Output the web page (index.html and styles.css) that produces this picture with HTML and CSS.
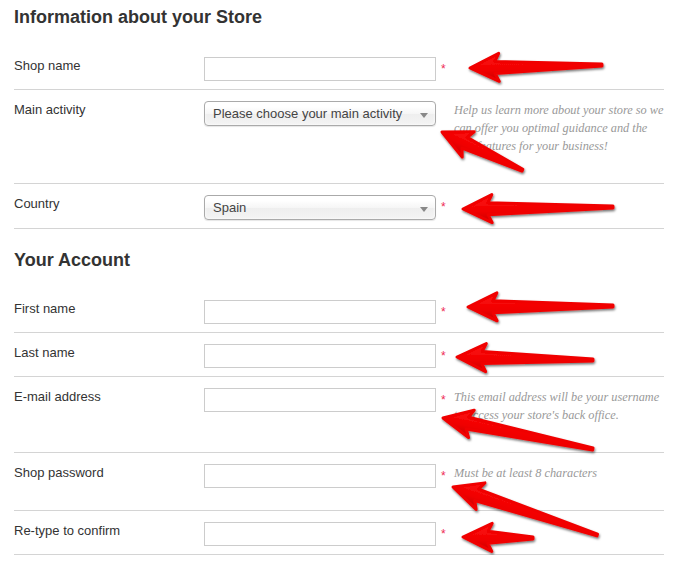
FILE: index.html
```html
<!DOCTYPE html>
<html lang="en">
<head>
<meta charset="utf-8">
<title>Store setup</title>
<link rel="stylesheet" href="styles.css">
</head>
<body>
<div class="page">
  <h2 class="section-title section-title--first">Information about your Store</h2>

  <div class="row">
    <label class="row-label">Shop name</label>
    <input class="text-input" type="text">
    <span class="required">*</span>
  </div>

  <div class="row">
    <label class="row-label">Main activity</label>
    <div class="select-box"><span class="select-text">Please choose your main activity</span><span class="select-caret"></span></div>
    <span class="required"></span>
    <p class="help">Help us learn more about your store so we can offer you optimal guidance and the best features for your business!</p>
  </div>

  <div class="row">
    <label class="row-label">Country</label>
    <div class="select-box"><span class="select-text">Spain</span><span class="select-caret"></span></div>
    <span class="required">*</span>
  </div>

  <h2 class="section-title">Your Account</h2>

  <div class="row">
    <label class="row-label">First name</label>
    <input class="text-input" type="text">
    <span class="required">*</span>
  </div>

  <div class="row">
    <label class="row-label">Last name</label>
    <input class="text-input" type="text">
    <span class="required">*</span>
  </div>

  <div class="row">
    <label class="row-label">E-mail address</label>
    <input class="text-input" type="text">
    <span class="required">*</span>
    <p class="help">This email address will be your username to access your store's back office.</p>
  </div>

  <div class="row">
    <label class="row-label">Shop password</label>
    <input class="text-input" type="password">
    <span class="required">*</span>
    <p class="help">Must be at least 8 characters</p>
  </div>

  <div class="row">
    <label class="row-label">Re-type to confirm</label>
    <input class="text-input" type="password">
    <span class="required">*</span>
  </div>
</div>

<svg class="annotations" width="690" height="562" viewBox="0 0 690 562" aria-hidden="true">
  <defs>
    <linearGradient id="redfill" x1="0" y1="0" x2="0" y2="1">
      <stop offset="0" stop-color="#ff1414"/>
      <stop offset="0.6" stop-color="#f00000"/>
      <stop offset="1" stop-color="#c80000"/>
    </linearGradient>
    <filter id="shadow" x="-20%" y="-50%" width="140%" height="200%">
      <feDropShadow dx="0.8" dy="1.6" stdDeviation="0.9" flood-color="#000" flood-opacity="0.55"/>
    </filter>
  </defs>
  <g class="arrow" fill="url(#redfill)" stroke="#f00000" stroke-width="3" stroke-linejoin="round" filter="url(#shadow)">
    <path transform="translate(470 68) rotate(-1.3)" d="M0,0 L29,-14 L25,-6 L132,-1 L132,1 L25,6 L29,14 Z"/>
    <path transform="translate(442 132) rotate(25.4)" d="M0,0 L29,-14 L25,-6 L89,-1 L89,1 L25,6 L29,14 Z"/>
    <path transform="translate(463 209) rotate(-0.8)" d="M0,0 L29,-14 L25,-6 L150,-1 L150,1 L25,6 L29,14 Z"/>
    <path transform="translate(468 307) rotate(-0.4)" d="M0,0 L29,-14 L25,-6 L145,-1 L145,1 L25,6 L29,14 Z"/>
    <path transform="translate(457 357) rotate(1.3)" d="M0,0 L29,-14 L25,-6 L136,-1 L136,1 L25,6 L29,14 Z"/>
    <path transform="translate(443 418) rotate(11.7)" d="M0,0 L29,-14 L25,-6 L153,-1 L153,1 L25,6 L29,14 Z"/>
    <path transform="translate(453 487) rotate(18.4)" d="M0,0 L29,-14 L25,-6 L152,-1 L152,1 L25,6 L29,14 Z"/>
    <path transform="translate(463 537) rotate(0.8)" d="M0,0 L29,-14 L25,-6 L70,-1 L70,1 L25,6 L29,14 Z"/>
  </g>
</svg>
</body>
</html>
```

FILE: styles.css
```css
html, body {
  margin: 0;
  padding: 0;
  background: #fff;
}

body {
  position: relative;
  font-family: "Liberation Sans", Arial, sans-serif;
  font-size: 13px;
  color: #333;
}

.page {
  width: 650px;
  padding-left: 14px;
  padding-top: 6px;
}

.section-title {
  margin: 20px 0 18px;
  font-size: 18px;
  line-height: 22px;
  font-weight: bold;
  color: #333;
}

.section-title--first {
  margin-top: 0;
}

.row {
  display: grid;
  grid-template-columns: 190px 232px 18px 1fr;
  align-items: start;
  padding: 11px 0 8px;
  border-bottom: 1px solid #d4d4d4;
}

.row-label {
  line-height: 18px;
  color: #333;
}

.text-input {
  box-sizing: border-box;
  width: 232px;
  height: 24px;
  margin: 0;
  padding: 0 6px;
  border: 1px solid #ccc;
  border-radius: 0;
  background: #fff;
  font: inherit;
  outline: none;
}

.select-box {
  box-sizing: border-box;
  width: 232px;
  height: 25px;
  display: flex;
  align-items: center;
  justify-content: space-between;
  padding: 0 7px 0 8px;
  border: 1px solid #aaa;
  border-radius: 4px;
  background: linear-gradient(#fff 20%, #f6f6f6 50%, #eee 52%, #f4f4f4 100%);
  box-shadow: inset 0 0 3px #fff, 0 1px 1px rgba(0, 0, 0, 0.1);
  color: #444;
  line-height: 23px;
}

.select-caret {
  width: 0;
  height: 0;
  margin-top: 3px;
  border-top: 5px solid #888;
  border-left: 4px solid transparent;
  border-right: 4px solid transparent;
}

.required {
  padding-left: 5px;
  font-size: 12px;
  line-height: 24px;
  color: #ee2a55;
}

.help {
  margin: 0 0 20px;
  width: 212px;
  font-family: "Liberation Serif", "Times New Roman", serif;
  font-style: italic;
  font-size: 12.3px;
  line-height: 18px;
  color: #999;
}

.annotations {
  position: absolute;
  left: 0;
  top: 0;
  pointer-events: none;
}
```
